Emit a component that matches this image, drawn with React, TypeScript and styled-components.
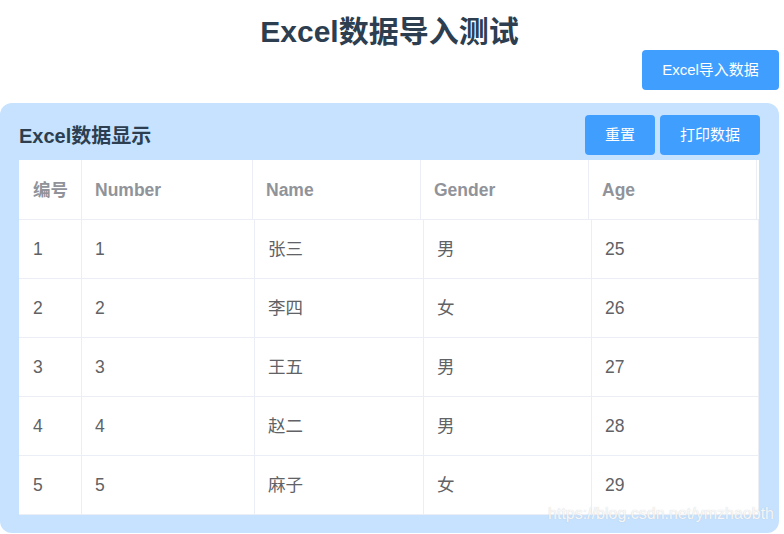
import styled, { createGlobalStyle } from 'styled-components';

const GlobalStyles = createGlobalStyle`
  html, body {
    margin: 0;
    padding: 0;
    background: #ffffff;
    font-family: "Liberation Sans", Arial, "Noto Sans CJK SC", sans-serif;
  }
`;

const Page = styled.div`
  width: 779px;
  position: relative;
`;

const Title = styled.h1`
  margin: 0;
  padding-top: 13px;
  height: 37px;
  line-height: 37px;
  text-align: center;
  font-size: 30px;
  font-weight: bold;
  color: #2c3e50;
`;

const TopBar = styled.div`
  display: flex;
  justify-content: flex-end;
  margin-bottom: 13px;
`;

const Button = styled.button<{ $w: number }>`
  width: ${(p) => p.$w}px;
  height: 40px;
  border: none;
  border-radius: 4px;
  background: #409eff;
  color: #ffffff;
  font-family: inherit;
  font-size: 15px;
  line-height: 18px;
  padding: 0;
  cursor: pointer;
`;

const Panel = styled.div`
  background: #c6e2ff;
  border-radius: 12px;
  padding: 12px 20px 18px 19px;
  height: 400px;
`;

const PanelHead = styled.div`
  display: flex;
  align-items: center;
  justify-content: space-between;
  margin-bottom: 5px;
`;

const PanelTitle = styled.h2`
  margin: 2px 0 0;
  font-size: 20px;
  line-height: 22px;
  font-weight: bold;
  color: #2c3e50;
`;

const Actions = styled.div`
  display: flex;
  gap: 5px;
  margin-right: -1px;
`;

const Table = styled.div`
  background: #ffffff;
  width: 740px;
  border-bottom: 1px solid #ebeef5;
`;

const Row = styled.div<{ $cols: string; $h: number }>`
  display: grid;
  grid-template-columns: ${(p) => p.$cols};
  height: ${(p) => p.$h}px;
  border-bottom: 1px solid #ebeef5;
  &:last-child {
    border-bottom: none;
  }
`;

const Cell = styled.div<{ $head?: boolean }>`
  display: flex;
  align-items: center;
  padding-left: 13px;
  border-right: 1px solid #ebeef5;
  font-size: 17.5px;
  line-height: 20px;
  font-weight: ${(p) => (p.$head ? 'bold' : 'normal')};
  color: ${(p) => (p.$head ? '#909399' : '#606266')};
  &:first-child {
    padding-left: 14px;
  }
`;

const Gutter = styled.div``;

const Watermark = styled.div`
  position: absolute;
  right: 5px;
  bottom: 10px;
  font-size: 16px;
  line-height: 18px;
  color: rgba(255, 255, 255, 0.85);
  text-shadow: 0 0 1px rgba(180, 180, 180, 0.7);
`;

const headCols = '63px 171px 168px 168px 168px 2px';
const bodyCols = '63px 173px 169px 168px 167px';

const rows = [
  ['1', '1', '张三', '男', '25'],
  ['2', '2', '李四', '女', '26'],
  ['3', '3', '王五', '男', '27'],
  ['4', '4', '赵二', '男', '28'],
  ['5', '5', '麻子', '女', '29'],
];

export default function App() {
  return (
    <>
      <GlobalStyles />
      <Page>
        <Title>Excel数据导入测试</Title>
        <TopBar>
          <Button $w={137}>Excel导入数据</Button>
        </TopBar>
        <Panel>
          <PanelHead>
            <PanelTitle>Excel数据显示</PanelTitle>
            <Actions>
              <Button $w={70}>重置</Button>
              <Button $w={100}>打印数据</Button>
            </Actions>
          </PanelHead>
          <Table>
            <Row $cols={headCols} $h={59}>
              {['编号', 'Number', 'Name', 'Gender', 'Age'].map((h) => (
                <Cell $head key={h}>{h}</Cell>
              ))}
              <Gutter />
            </Row>
            {rows.map((r) => (
              <Row $cols={bodyCols} $h={58} key={r[0]}>
                {r.map((v, i) => (
                  <Cell key={i}>{v}</Cell>
                ))}
              </Row>
            ))}
          </Table>
        </Panel>
        <Watermark>https://blog.csdn.net/ymzhaobth</Watermark>
      </Page>
    </>
  );
}
